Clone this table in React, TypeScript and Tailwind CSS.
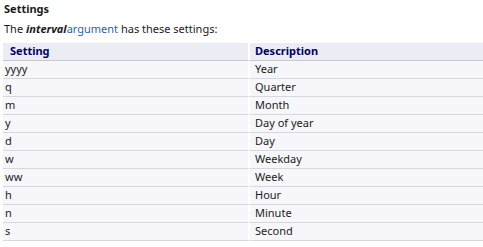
const rows: [string, string][] = [
  ['yyyy', 'Year'],
  ['q', 'Quarter'],
  ['m', 'Month'],
  ['y', 'Day of year'],
  ['d', 'Day'],
  ['w', 'Weekday'],
  ['ww', 'Week'],
  ['h', 'Hour'],
  ['n', 'Minute'],
  ['s', 'Second'],
];

export default function App() {
  return (
    <div className="w-[483px] h-[247px] bg-white overflow-hidden text-[11px] leading-[14px] text-[#1a1a1a]" style={{ fontFamily: '"Noto Sans", "DejaVu Sans", sans-serif' }}>
      <div className="pl-[4px] pt-[2px] font-bold">Settings</div>
      <div className="pl-[4px] pt-[6px]">
        The <b><i>interval</i></b>
        <span className="text-[#1f5fa8]">argument</span> has these settings:
      </div>
      <table className="mt-[7px] ml-[3px] w-[480px] border-separate border-spacing-0">
        <thead>
          <tr>
            <th className="h-[18px] w-[247px] bg-[#ececf4] border-b border-[#c8c8d0] border-r-2 border-r-white pl-[7px] pb-[1px] text-left font-bold text-[#000066]">Setting</th>
            <th className="h-[18px] bg-[#ececf4] border-b border-[#c8c8d0] pl-[5px] pb-[1px] text-left font-bold text-[#000066]">Description</th>
          </tr>
        </thead>
        <tbody>
          {rows.map(([k, v]) => (
            <tr key={k}>
              <td className="h-[18px] bg-[#f7f7fb] border-b border-[#d8d8dc] border-r-2 border-r-white pl-[2px] pb-[1px]">{k}</td>
              <td className="h-[18px] bg-[#f7f7fb] border-b border-[#d8d8dc] pl-[5px] pb-[1px]">{v}</td>
            </tr>
          ))}
        </tbody>
      </table>
    </div>
  );
}
